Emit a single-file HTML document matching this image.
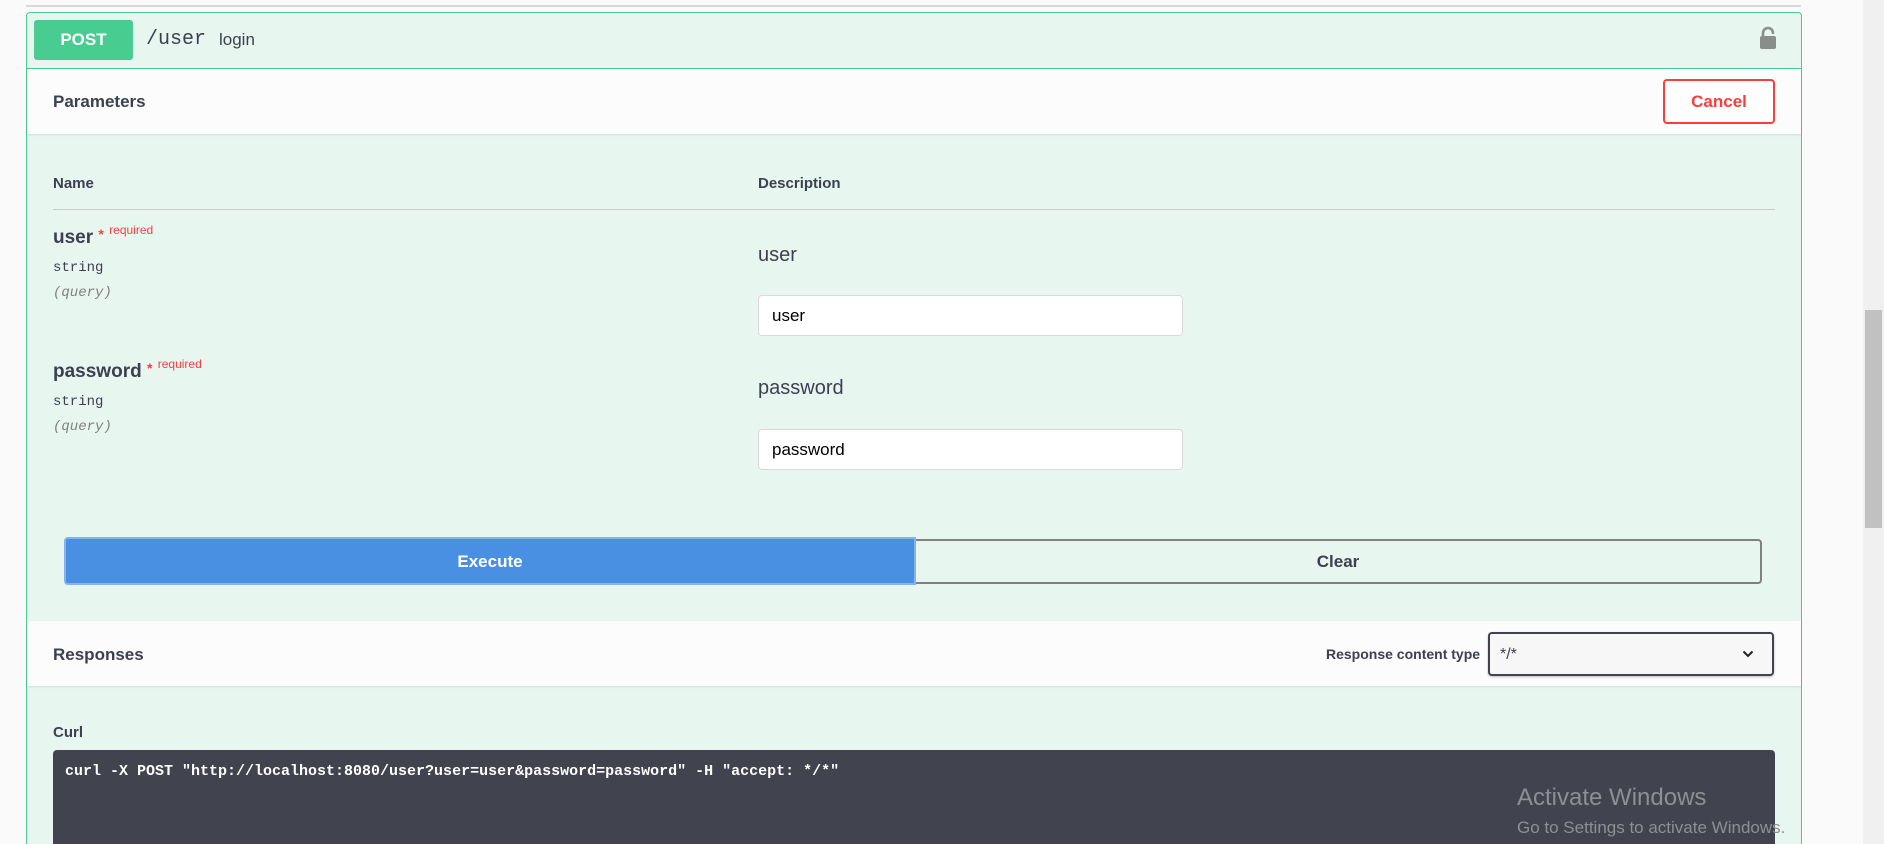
<!DOCTYPE html>
<html style="width:1884px;height:844px;overflow:hidden"><head><meta charset="utf-8"><style>
*{box-sizing:border-box;margin:0;padding:0}
body{width:1884px;height:844px;overflow:hidden;background:#fafafa;font-family:"Liberation Sans Narrow","Liberation Sans",sans-serif;color:#3b4151;position:relative}
.abs{position:absolute}
.b{font-weight:bold}
.mono{font-family:"Liberation Mono",monospace}
</style></head><body>
<div class="abs" style="left:26px;top:5px;width:1775px;height:2px;background:#d8d8d8"></div>
<div class="abs" style="left:26px;top:12px;width:1776px;height:832px;border:1px solid #49cc90;border-bottom:none;border-radius:4px 4px 0 0;background:#e8f6f0"></div>
<!-- header -->
<div class="abs b" style="left:34px;top:20px;width:99px;height:40px;background:#49cc90;border-radius:3px;color:#fff;font-size:17px;text-align:center;line-height:40px">POST</div>
<div class="abs mono" style="left:146px;top:28px;font-size:20px;color:#3b4151">/user</div>
<div class="abs" style="left:219px;top:30px;font-size:17px;color:#3b4151">login</div>
<svg class="abs" style="left:1759px;top:26px" width="18" height="24" viewBox="0 0 18 24"><path d="M4 11V7a5 5 0 0 1 10 0v1" fill="none" stroke="#888f8b" stroke-width="2.6"/><rect x="1" y="10" width="16" height="13" rx="2" fill="#888f8b"/></svg>
<div class="abs" style="left:27px;top:68px;width:1774px;height:1px;background:#49cc90"></div>
<!-- params header -->
<div class="abs" style="left:27px;top:69px;width:1774px;height:65px;background:#fcfcfc;box-shadow:0 1px 2px rgba(0,0,0,.1)"></div>
<div class="abs b" style="left:53px;top:92px;font-size:17px">Parameters</div>
<div class="abs b" style="left:1663px;top:79px;width:112px;height:45px;border:2px solid #f93e3e;border-radius:4px;color:#f93e3e;font-size:17px;text-align:center;line-height:41px;background:#fff">Cancel</div>
<!-- table head -->
<div class="abs b" style="left:53px;top:175px;font-size:15px">Name</div>
<div class="abs b" style="left:758px;top:175px;font-size:15px">Description</div>
<div class="abs" style="left:53px;top:209px;width:1722px;height:1px;background:#c8cfcb"></div>
<!-- user -->
<div class="abs b" style="left:53px;top:227px;font-size:19px">user <span style="color:#f93e3e;font-size:14px;position:relative;top:-4px">*</span> <span style="color:#f93e3e;font-size:12px;font-weight:normal;position:relative;top:-9px">required</span></div>
<div class="abs mono" style="left:53px;top:260px;font-size:14px">string</div>
<div class="abs mono" style="left:53px;top:285px;font-size:14px;font-style:italic;color:#808080">(query)</div>
<div class="abs" style="left:758px;top:244px;font-size:20px;color:#3b4151;font-family:'Liberation Sans',sans-serif">user</div>
<div class="abs" style="left:758px;top:295px;width:425px;height:41px;background:#fff;border:1px solid #d9d9d9;border-radius:4px;font-family:'Liberation Sans',sans-serif;font-size:17px;color:#000;padding-left:13px;line-height:39px">user</div>
<!-- password -->
<div class="abs b" style="left:53px;top:361px;font-size:19px">password <span style="color:#f93e3e;font-size:14px;position:relative;top:-4px">*</span> <span style="color:#f93e3e;font-size:12px;font-weight:normal;position:relative;top:-9px">required</span></div>
<div class="abs mono" style="left:53px;top:394px;font-size:14px">string</div>
<div class="abs mono" style="left:53px;top:419px;font-size:14px;font-style:italic;color:#808080">(query)</div>
<div class="abs" style="left:758px;top:377px;font-size:20px;color:#3b4151;font-family:'Liberation Sans',sans-serif">password</div>
<div class="abs" style="left:758px;top:429px;width:425px;height:41px;background:#fff;border:1px solid #d9d9d9;border-radius:4px;font-family:'Liberation Sans',sans-serif;font-size:17px;color:#000;padding-left:13px;line-height:39px">password</div>
<!-- buttons -->
<div class="abs b" style="left:64px;top:537px;width:852px;height:48px;background:#4990e2;border:2px solid #84b4ec;border-radius:4px 0 0 4px;color:#fff;font-size:17px;text-align:center;line-height:46px">Execute</div>
<div class="abs b" style="left:916px;top:539px;width:846px;height:45px;border:2px solid #808080;border-left:none;border-radius:0 4px 4px 0;color:#3b4151;font-size:17px;text-align:center;line-height:41px">Clear</div>
<!-- responses -->
<div class="abs" style="left:27px;top:621px;width:1774px;height:65px;background:#fcfcfc;box-shadow:0 1px 2px rgba(0,0,0,.1)"></div>
<div class="abs b" style="left:53px;top:645px;font-size:17px">Responses</div>
<div class="abs b" style="left:1326px;top:646px;font-size:14px">Response content type</div>
<div class="abs" style="left:1488px;top:632px;width:286px;height:44px;border:2px solid #41444e;border-radius:4px;background:#f7f7f7;box-shadow:0 1px 2px rgba(0,0,0,.25)"></div>
<div class="abs" style="left:1500px;top:646px;font-size:16px;color:#3b4151;font-family:'Liberation Sans',sans-serif">*/*</div>
<svg class="abs" style="left:1742px;top:649px" width="12" height="10" viewBox="0 0 12 10"><path d="M1.5 2.5L6 7l4.5-4.5" fill="none" stroke="#222" stroke-width="2"/></svg>
<div class="abs b" style="left:53px;top:724px;font-size:15px">Curl</div>
<div class="abs" style="left:53px;top:750px;width:1722px;height:94px;background:#41444e;border-radius:4px 4px 0 0"></div>
<div class="abs b mono" style="left:65px;top:763px;font-size:15px;color:#fff;white-space:pre">curl -X POST "http://localhost:8080/user?user=user&amp;password=password" -H "accept: */*"</div>
<div class="abs" style="left:1517px;top:784px;font-size:24px;color:#8d8f95;font-family:'Liberation Sans',sans-serif;white-space:nowrap">Activate Windows</div>
<div class="abs" style="left:1517px;top:818px;font-size:17px;color:#8d8f95;font-family:'Liberation Sans',sans-serif;white-space:nowrap">Go to Settings to activate Windows.</div>
<!-- scrollbar -->
<div class="abs" style="left:1863px;top:0;width:21px;height:844px;background:#f0f0f0"></div>
<div class="abs" style="left:1865px;top:310px;width:17px;height:218px;background:#c1c1c1"></div>
</body></html>
